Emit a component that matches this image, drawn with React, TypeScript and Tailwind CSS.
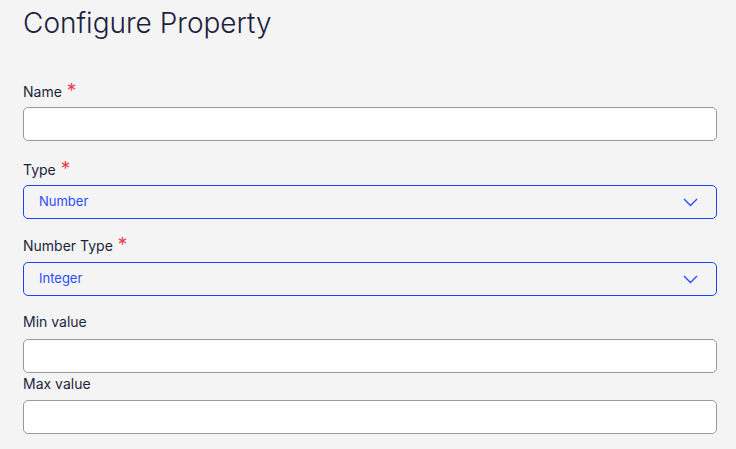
import type { ReactNode } from "react";

function Label({ children, required }: { children: ReactNode; required?: boolean }) {
  return (
    <label className="flex h-5 items-center text-[14px] leading-5 text-[#1c1f3d]">
      {children}
      {required && <span className="ml-[5px] -mt-[3px] text-[19px] leading-none text-[#ee3a4e]">*</span>}
    </label>
  );
}

function TextInput() {
  return (
    <input
      type="text"
      className="h-[34px] w-full rounded-[5px] border border-[#9a9a9a] bg-white px-4 text-[13px] outline-none"
    />
  );
}

function Select({ value }: { value: string }) {
  return (
    <div className="flex h-[34px] w-full items-center justify-between rounded-[5px] border border-[#1a44ff] bg-[#f4f4f4] pl-[15px] pr-[18px] text-[13px] text-[#2b4cff]">
      <span>{value}</span>
      <svg width="15" height="9" viewBox="0 0 15 9" fill="none">
        <path d="M1 1l6.5 6.5L14 1" stroke="#2b4cff" strokeWidth="1.4" />
      </svg>
    </div>
  );
}

export default function App() {
  return (
    <div
      className="min-h-[449px] w-full bg-[#f4f4f4] pl-[23px] pr-[19px] pt-[5px]"
      style={{ fontFamily: "Inter, 'Noto Sans', sans-serif" }}
    >
      <h1 className="text-[28px] font-light leading-9 text-[#1c1f3d]">Configure Property</h1>

      <div className="mt-[41px]">
        <Label required>Name</Label>
        <div className="mt-[5px]">
          <TextInput />
        </div>
      </div>

      <div className="mt-[19px]">
        <Label required>Type</Label>
        <div className="mt-[5px]">
          <Select value="Number" />
        </div>
      </div>

      <div className="mt-[17px]">
        <Label required>Number Type</Label>
        <div className="mt-[6px]">
          <Select value="Integer" />
        </div>
      </div>

      <div className="mt-[16px]">
        <Label>Min value</Label>
        <div className="mt-[7px]">
          <TextInput />
        </div>
      </div>

      <div className="mt-[1px]">
        <Label>Max value</Label>
        <div className="mt-[6px]">
          <TextInput />
        </div>
      </div>
    </div>
  );
}
